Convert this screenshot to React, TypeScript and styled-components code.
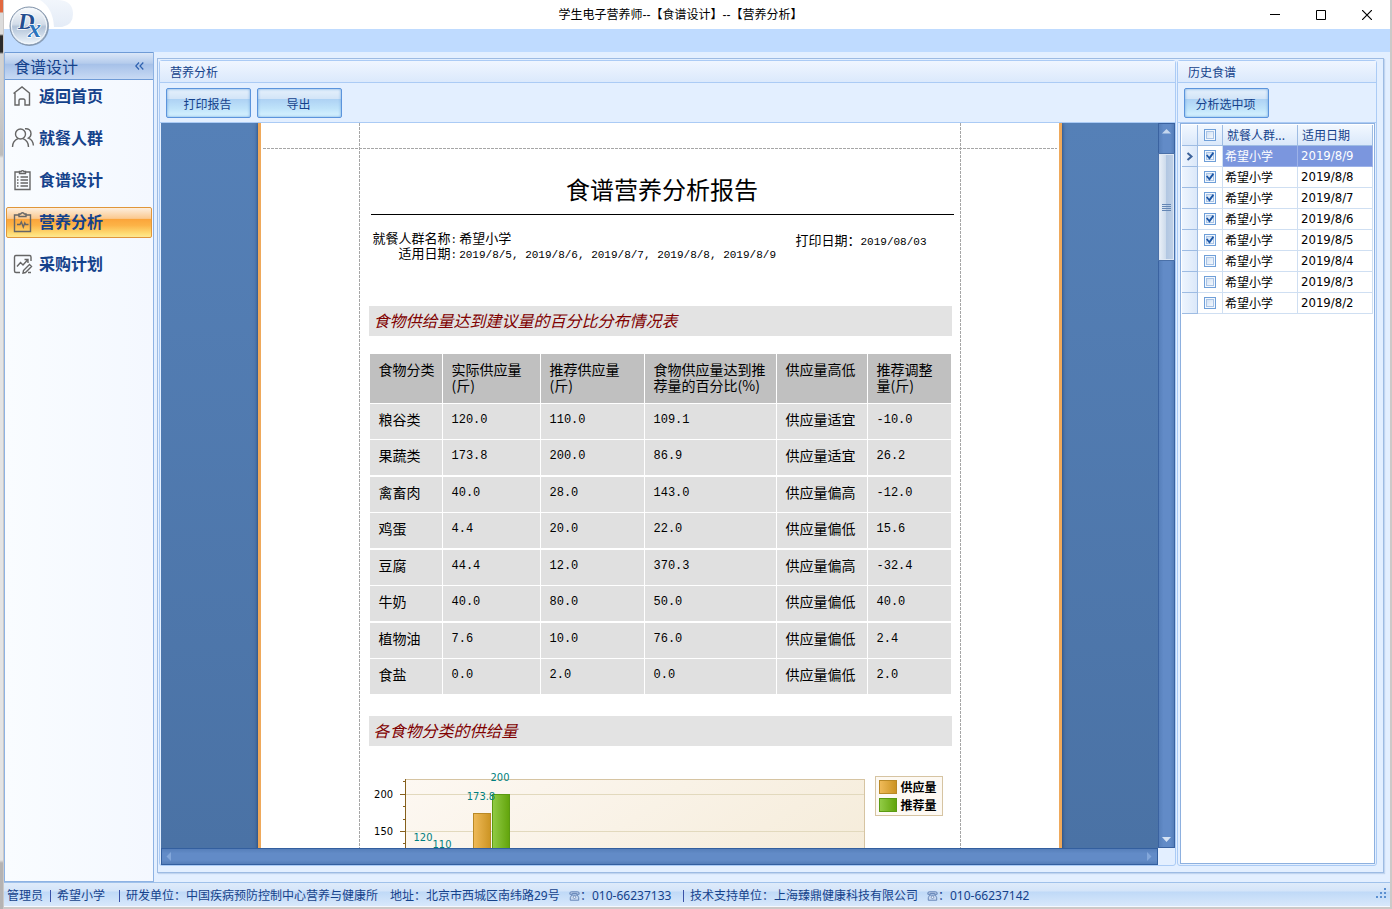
import React from "react";
import styled, { createGlobalStyle, css } from "styled-components";

const ui = `"Liberation Sans", "Noto Sans CJK SC", sans-serif`;
const cjk = `"Noto Sans CJK SC", sans-serif`;
const tahoma = `"DejaVu Sans Condensed", "Noto Sans CJK SC", sans-serif`;
const mono = `"Liberation Mono", "Noto Sans CJK SC", monospace`;
const ink = "#15428b";

const GlobalStyle = createGlobalStyle`
  * { box-sizing: border-box; }
  body {
    margin: 0;
    background: #c9c6c4;
    font-family: ${ui};
    font-size: 12px;
    color: ${ink};
  }
`;

/* ---------- window ---------- */

const Desktop = styled.div`
  display: flex;
  height: 100vh;
  min-height: 600px;
  padding: 0 2px 2px 4px;
  background:
    linear-gradient(#e2683f 0 12px, #dcdcdc 13px 34px, #2b2b2b 36px 52px, #d2d2d2 54px 90px, #bcbcbc 155px, #e4e4e4 158px 860px, #b5b3b3 863px) 0 0 / 3px 100% no-repeat,
    #cbc9c8;
`;

const Window = styled.div`
  position: relative;
  flex: 1;
  min-width: 0;
  display: flex;
  flex-direction: column;
  background: #e3efff;
`;

const TitleBar = styled.header`
  flex: none;
  height: 29px;
  display: flex;
  align-items: center;
  padding-left: 105px;
  background: #fff;
`;

const WindowTitle = styled.h1`
  flex: 1;
  margin: 0;
  text-align: center;
  font: 12px/28px ${ui};
  color: #000;
`;

const WindowButton = styled.button`
  width: 46px;
  height: 28px;
  padding: 0;
  border: 0;
  background: none;
  display: flex;
  align-items: center;
  justify-content: center;
`;

const RibbonBand = styled.div`
  flex: none;
  height: 23px;
  background: #bfdbff;
`;

const AppMenu = styled.button`
  position: absolute;
  left: 0;
  top: 0;
  width: 72px;
  height: 50px;
  padding: 0;
  border: 0;
  background: none;
  svg { display: block; }
`;

const Body = styled.div`
  flex: 1;
  min-height: 0;
  display: flex;
`;

/* ---------- navigation ---------- */

const Sidebar = styled.nav`
  flex: none;
  width: 150px;
  border: 1px solid #8db2e3;
  border-top: 0;
  background: linear-gradient(90deg, #f9fcff, #f4f8ff);
`;

const SidebarHeader = styled.div`
  display: flex;
  align-items: center;
  justify-content: space-between;
  height: 28px;
  padding: 0 9px;
  border: 1px solid #6f9bd6;
  border-width: 1px 0;
  background: linear-gradient(#dbe7f8, #b4cbec 40%, #a5c0e8 42%, #c8daf4);
  font: 16px/26px ${cjk};
`;

const CollapseButton = styled.button`
  padding: 0;
  border: 0;
  background: none;
  line-height: 0;
`;

const NavList = styled.ul`
  display: flex;
  flex-direction: column;
  gap: 11px;
  margin: 0;
  padding: 1px;
  list-style: none;
`;

const NavLink = styled.a<{ $active?: boolean }>`
  display: flex;
  align-items: center;
  gap: 4px;
  height: 31px;
  padding: 0 0 2px 4px;
  border: 1px solid transparent;
  border-radius: 2px;
  font: bold 16px/27px ${cjk};
  color: ${ink};
  text-decoration: none;
  svg { flex: none; }
  ${(p) =>
    p.$active &&
    css`
      border-color: #e0963a;
      background: linear-gradient(#fdeedd, #fbc98f 36%, #fba43a 38%, #fcb347 60%, #fedf78 90%, #fee792);
    `}
`;

/* ---------- panels ---------- */

const Frame = styled.main`
  flex: 1;
  min-width: 0;
  display: flex;
  gap: 1px;
  margin: 6px 6px 9px 3px;
  padding: 1px 6px 6px 1px;
  border: 1px solid #9dbbe3;
  box-shadow: 1px 1px 1px #c1d5ef;
`;

const Panel = styled.section<{ $fixed?: boolean }>`
  ${(p) => (p.$fixed ? "flex: none; width: 200px;" : "flex: 1; min-width: 0;")}
  display: flex;
  flex-direction: column;
  border: 1px solid #abcbf5;
  border-radius: 3px;
`;

const Caption = styled.h2`
  flex: none;
  margin: 0;
  height: 22px;
  padding-left: 10px;
  border-bottom: 1px solid #abcbf5;
  background: linear-gradient(#f0f6ff, #dbe9fc);
  font: 12px/22px ${cjk};
`;

const Toolbar = styled.div`
  flex: none;
  display: flex;
  gap: 6px;
  height: 40px;
  padding: 5px 6px 0;
  border-bottom: 1px solid #abcbf5;
`;

const Button = styled.button`
  width: 85px;
  height: 30px;
  padding: 1px 2px 0 0;
  border: 1px solid #5b94dc;
  border-radius: 2px;
  background: linear-gradient(#e6f1fc, #d3e5f8 34%, #aed2f4 37%, #bfe3fa 70%, #d9f4ff);
  box-shadow: inset 0 0 3px #6ea4de;
  font: 12px/26px ${cjk};
  color: ${ink};
`;

/* ---------- report viewer ---------- */

const Viewer = styled.div`
  flex: 1;
  min-height: 0;
  display: grid;
  grid-template-columns: minmax(0, 1fr) 17px;
  grid-template-rows: minmax(0, 1fr) 17px;
  padding-left: 1px;
`;

const Canvas = styled.div`
  overflow: hidden;
  display: flex;
  justify-content: center;
  background: linear-gradient(#5580b7, #4a72a5);
`;

const Sheet = styled.article`
  flex: none;
  width: 804px;
  height: 1000px;
  padding: 50px 107px 0 108px;
  border: solid #efa95b;
  border-width: 0 3px;
  background:
    repeating-linear-gradient(90deg, #a6a6a6 0 3px, transparent 3px 4px) 2px 25px / 794px 1px no-repeat,
    repeating-linear-gradient(#a6a6a6 0 3px, transparent 3px 4px) 98px 0 / 1px 100% no-repeat,
    repeating-linear-gradient(#a6a6a6 0 3px, transparent 3px 4px) 699px 0 / 1px 100% no-repeat,
    #fff;
  box-shadow: 0 0 4px #1d3c6c;
  color: #000;
`;

const ReportTitle = styled.h3`
  margin: 0 -2px 0 2px;
  padding-bottom: 9px;
  border-bottom: 1px solid #000;
  text-align: center;
  font: 24px/32px ${cjk};
`;

const ReportInfo = styled.div`
  display: flex;
  justify-content: space-between;
  height: 46px;
  padding: 15px 25px 0 4px;
  font: 13px/15px ${cjk};
`;

const InfoList = styled.dl`
  display: grid;
  grid-template-columns: auto auto;
  grid-auto-rows: 15px;
  column-gap: 2px;
  margin: 0;
  dt { text-align: right; }
  dd { margin: 0; white-space: nowrap; }
`;

const PrintDate = styled.div`
  padding-top: 2px;
`;

const Figures = styled.span`
  font-family: ${mono};
  font-size: 11px;
  line-height: 1;
`;

const Band = styled.h4<{ $gap: number }>`
  margin: ${(p) => p.$gap}px 0 0;
  height: 30px;
  padding-left: 5px;
  background: #e3e3e3;
  font: italic 16px/28px ${cjk};
  color: #800000;
`;

const FoodTable = styled.table`
  table-layout: fixed;
  width: 581px;
  margin: 18px 0 0 1px;
  border-collapse: separate;
  border-spacing: 0;
  th, td {
    padding: 7px 0 0 9px;
    border: solid #fff;
    border-width: 0 1px 1px 0;
    background: #e0e0e0;
    background-clip: padding-box;
    vertical-align: top;
    text-align: left;
    font: 14px/16px ${cjk};
    white-space: nowrap;
  }
  th:last-child, td:last-child { border-right: 0; }
  thead th { height: 50px; background-color: #c0c0c0; }
  tbody tr > * { height: 36px; }
  tbody tr:nth-child(even) > * { height: 37px; border-bottom-width: 2px; }
  td.figure { padding-top: 8px; font: 12px/16px ${mono}; }
`;

const ChartRow = styled.div`
  display: flex;
  align-items: flex-start;
  gap: 6px;
  margin-top: 24px;
  svg { flex: none; display: block; }
`;

const Legend = styled.ul`
  flex: none;
  width: 68px;
  height: 40px;
  margin: 6px 0 0;
  padding: 1px 3px;
  border: 1px solid #d6c4a2;
  background: #fdf9f3;
  list-style: none;
  li {
    display: flex;
    align-items: center;
    gap: 4px;
    height: 18px;
    font: bold 12px/18px ${cjk};
  }
`;

const Swatch = styled.i<{ $from: string; $to: string; $edge: string }>`
  width: 18px;
  height: 14px;
  border: 1px solid ${(p) => p.$edge};
  background: linear-gradient(90deg, ${(p) => p.$from}, ${(p) => p.$to});
`;

/* ---------- scroll bars ---------- */

const VScroll = styled.div`
  display: flex;
  flex-direction: column;
  align-items: stretch;
  justify-content: space-between;
  border: 1px solid #3a62a0;
  background: linear-gradient(90deg, #567fba, #628bc7 30%, #628bc7 75%, #557eb9);
`;

const HScroll = styled.div`
  display: flex;
  justify-content: space-between;
  border: 1px solid #335f9f;
  background: linear-gradient(#567fba, #628bc7 30%, #628bc7 75%, #557eb9);
`;

const Arrow = styled.svg`
  flex: none;
  display: block;
  width: 15px;
  height: 15px;
`;

const Track = styled.div`
  flex: 1;
  padding-top: 15px;
`;

const Thumb = styled.div`
  display: flex;
  flex-direction: column;
  justify-content: center;
  align-items: center;
  gap: 1px;
  height: 106px;
  border: 1px solid #dfe8f4;
  box-shadow: 0 0 0 1px #4a70a8;
  background: linear-gradient(90deg, #e6edf6, #cddbec 45%, #b2c7e2 50%, #bfd0e6);
  i { width: 9px; height: 1px; background: #6486b4; }
`;

/* ---------- history grid ---------- */

const GridBox = styled.div`
  flex: 1;
  min-height: 0;
  margin: 0 1px 1px 2px;
  padding: 1px;
  border: 1px solid #8db0df;
  background: #fff;
`;

const HistoryTable = styled.table`
  table-layout: fixed;
  width: 100%;
  border-collapse: separate;
  border-spacing: 0;
  th, td {
    height: 21px;
    padding: 0 0 0 2px;
    border: solid #cfdff2;
    border-width: 0 1px 1px 0;
    text-align: left;
    white-space: nowrap;
    overflow: hidden;
    font: 12px/20px ${cjk};
    color: #000;
  }
  thead th {
    padding-left: 4px;
    border-color: #9ebce3;
    background: linear-gradient(#f2f8ff, #dae8fa);
    color: ${ink};
  }
  th.mark {
    padding: 0 0 0 4px;
    line-height: 0;
    border-color: #9ebce3;
    background: linear-gradient(90deg, #eef5fe, #dbe8f9);
  }
  th.pick, td.pick { padding: 0; text-align: center; line-height: 0; }
  td.date { padding-left: 3px; font: 13px/20px ${tahoma}; }
  tr.selected td:not(.pick) { background: #7b96de; color: #fff; border-color: #9db2e8; }
`;

const CheckBox = styled.input`
  appearance: none;
  position: relative;
  width: 12px;
  height: 12px;
  margin: 0;
  vertical-align: middle;
  border: 1px solid #6f9fd8;
  background: linear-gradient(135deg, #c6d9f0, #fff);
  box-shadow: inset 0 0 0 1px #f3f8fe, inset 0 0 0 2px #a9c4e6;
  &:checked::before {
    content: "";
    position: absolute;
    inset: 1px;
    background: #1c56a6;
    clip-path: polygon(0 45%, 18% 32%, 40% 58%, 85% 0, 100% 18%, 44% 98%);
  }
`;

/* ---------- status bar ---------- */

const StatusBar = styled.footer`
  flex: none;
  display: flex;
  align-items: center;
  height: 25px;
  padding: 2px 2px 0 3px;
  border-top: 1px solid #9fc1ea;
  border-bottom: 1px solid #f5f9ff;
  background: linear-gradient(#dfebfa, #d3e4f9 36%, #bfd9f7 38%, #d8e8fb);
  font: 12px/20px "Noto Sans", "Noto Sans CJK SC", sans-serif;
  white-space: nowrap;
`;

const StatusItem = styled.span<{ $width: number }>`
  flex: none;
  display: flex;
  align-items: center;
  width: ${(p) => p.$width}px;
`;

const Separator = styled.i`
  flex: none;
  width: 1px;
  height: 12px;
  margin-right: 6px;
  background: #3a52a8;
`;

const Grip = styled.svg`
  margin: 0 0 4px auto;
`;

/* ---------- drawings ---------- */

const iconProps = {
  width: 24,
  height: 24,
  viewBox: "0 0 24 24",
  fill: "none",
  stroke: "#666",
  strokeWidth: 1.4,
  "aria-hidden": true,
} as const;

const HomeIcon = () => (
  <svg {...iconProps}>
    <path d="M2.500 9.500 11 3 19 9.500M4 9V21H8V16.500a1.500 1.500 0 0 1 1.500-1.500h3a1.500 1.500 0 0 1 1.500 1.500V21H18.500V9" />
  </svg>
);

const PeopleIcon = () => (
  <svg {...iconProps}>
    <circle cx="9.5" cy="8" r="5" />
    <path d="M1.500 21c0-4 2.500-7 5.500-8.300M12 12.700c3 1.300 5.500 4.300 5.500 8.300M14 2.800c3.500-.6 6 1.700 6 4.700 0 2.200-1 3.800-2.600 4.600 2.800 1.200 4.800 3.900 5 7.400" />
  </svg>
);

const ListIcon = () => (
  <svg {...iconProps}>
    <path d="M8 4H4V21.500H19V4H15M8.500 5.500V3.500h1.700a1.400 1.400 0 0 1 2.600 0h1.700v2Z" />
    <path d="M9.500 9H17M9.500 12H17M9.500 15H17M9.500 18H17M6 9h1.500M6 12h1.500M6 15h1.500M6 18h1.500" />
  </svg>
);

const ChartBoardIcon = () => (
  <svg {...iconProps}>
    <path d="M8 5H3.500V21.500H19.500V5H15M8 6.500V4h1.700a1.900 1.900 0 0 1 3.600 0H15v2.500Z" />
    <path d="M6 14.500h3l1.300-2.500 2 5 1.500-4 .8 1.500H17.500" />
  </svg>
);

const PlanIcon = () => (
  <svg {...iconProps}>
    <path d="M20 9V5a1.500 1.500 0 0 0-1.500-1.500H5A1.500 1.500 0 0 0 3.500 5V19A1.500 1.500 0 0 0 5 20.500H9" />
    <path d="M6 14.500 9.500 10.500 12 13 16.500 8M13.500 7.500H17V11M12.500 18.500 18.500 12.500 20.500 14.500 14.500 20.500 12 21ZM17 20.500H20" />
  </svg>
);

const PhoneIcon = () => (
  <svg width="13" height="12" viewBox="0 0 13 12" aria-hidden="true">
    <path d="M1 4V2.500Q1 1 3 1H10Q12 1 12 2.500V4H9V3H4V4Z" fill="#b6c9e6" stroke="#5879ae" />
    <path d="M3 5H10L11.500 8V11H1.500V8Z" fill="#cbdaf0" stroke="#5879ae" />
    <circle cx="6.500" cy="7.500" r="1.500" fill="#eef4fd" stroke="#5879ae" strokeWidth=".8" />
  </svg>
);

const Logo = () => (
  <svg width="72" height="50" viewBox="0 0 72 50" aria-hidden="true">
    <defs>
      <linearGradient id="orb" x2="0" y2="1">
        <stop offset="0" stopColor="#fafcfe" />
        <stop offset=".45" stopColor="#d3dde9" />
        <stop offset=".52" stopColor="#b2c3d8" />
        <stop offset="1" stopColor="#f0f7fd" />
      </linearGradient>
      <linearGradient id="tab" x2="0" y2="1">
        <stop offset="0" stopColor="#f2f6fc" />
        <stop offset="1" stopColor="#e4ecf7" />
      </linearGradient>
    </defs>
    <path d="M36 0H55Q69 1 69 14Q69 25 58 27H50Q49 8 36 0Z" fill="url(#tab)" />
    <circle cx="25.500" cy="26.500" r="19.500" fill="#66798f" opacity=".6" />
    <circle cx="25" cy="26" r="19" fill="url(#orb)" stroke="#8193aa" />
    <circle cx="25" cy="26" r="17.500" fill="none" stroke="#f4f8fc" />
    <g fontFamily="Liberation Serif, serif" fontStyle="italic" fontWeight="bold" stroke="#fff" strokeWidth="1.500" paintOrder="stroke">
      <text x="14" y="29" fontSize="23" fill="#244f91">D</text>
      <text x="24" y="37" fontSize="26" fill="#2a73bd">x</text>
    </g>
  </svg>
);

const SupplyChart = () => (
  <svg width="500" height="160" viewBox="0 0 500 160" fontFamily="DejaVu Sans Condensed, sans-serif" fontSize="11" role="img" aria-label="各食物分类的供给量">
    <defs>
      <linearGradient id="plot" x2="1" y2=".5">
        <stop offset="0" stopColor="#fdf8f2" />
        <stop offset="1" stopColor="#f5ecda" />
      </linearGradient>
      <linearGradient id="gold"><stop stopColor="#efba59" /><stop offset="1" stopColor="#cc9423" /></linearGradient>
      <linearGradient id="leaf"><stop stopColor="#91cb45" /><stop offset="1" stopColor="#62a40b" /></linearGradient>
    </defs>
    <g shapeRendering="crispEdges">
      <rect x="36.500" y="9.500" width="459" height="150" fill="url(#plot)" stroke="#d6c4a2" />
      <path d="M37 24.500H495M37 61.500H495" stroke="#e2d9bd" />
      <path d="M36.500 9V160M31 24.500h5M31 61.500h5M34 11.500h2M34 36.500h2M34 49.500h2M34 73.500h2" stroke="#86601d" />
      <rect x="104.500" y="43.500" width="17" height="120" fill="url(#gold)" stroke="#b98926" />
      <rect x="123.500" y="24.500" width="17" height="140" fill="url(#leaf)" stroke="#5b9a12" />
    </g>
    <g fill="#000" textAnchor="end">
      <text x="24" y="28">200</text>
      <text x="24" y="65">150</text>
    </g>
    <g fill="#007f80" textAnchor="middle">
      <text x="54" y="71">120</text>
      <text x="73" y="78">110</text>
      <text x="112" y="30">173.8</text>
      <text x="131" y="11">200</text>
    </g>
  </svg>
);

/* ---------- data ---------- */

const navItems = [
  { label: "返回首页", Icon: HomeIcon },
  { label: "就餐人群", Icon: PeopleIcon },
  { label: "食谱设计", Icon: ListIcon },
  { label: "营养分析", Icon: ChartBoardIcon, active: true },
  { label: "采购计划", Icon: PlanIcon },
];

const foods = [
  ["粮谷类", "120.0", "110.0", "109.1", "供应量适宜", "-10.0"],
  ["果蔬类", "173.8", "200.0", "86.9", "供应量适宜", "26.2"],
  ["禽畜肉", "40.0", "28.0", "143.0", "供应量偏高", "-12.0"],
  ["鸡蛋", "4.4", "20.0", "22.0", "供应量偏低", "15.6"],
  ["豆腐", "44.4", "12.0", "370.3", "供应量偏高", "-32.4"],
  ["牛奶", "40.0", "80.0", "50.0", "供应量偏低", "40.0"],
  ["植物油", "7.6", "10.0", "76.0", "供应量偏低", "2.4"],
  ["食盐", "0.0", "2.0", "0.0", "供应量偏低", "2.0"],
];

const columnWidths = [73, 98, 104, 132, 91, 83];

const history = [9, 8, 7, 6, 5, 4, 3, 2].map((day) => ({
  group: "希望小学",
  date: `2019/8/${day}`,
  checked: day >= 5,
  selected: day === 9,
}));

export default function App() {
  return (
    <>
      <GlobalStyle />
      <Desktop>
        <Window>
          <TitleBar>
            <WindowTitle>学生电子营养师--【食谱设计】--【营养分析】</WindowTitle>
            <WindowButton aria-label="最小化">
              <svg width="10" height="10"><path d="M0 4.500H10" stroke="#000" /></svg>
            </WindowButton>
            <WindowButton aria-label="最大化">
              <svg width="10" height="10"><path d="M.5.5H9.500V9.500H.5Z" fill="none" stroke="#000" /></svg>
            </WindowButton>
            <WindowButton aria-label="关闭">
              <svg width="10" height="10"><path d="M0 0 10 10M10 0 0 10" stroke="#000" strokeWidth="1.200" /></svg>
            </WindowButton>
          </TitleBar>
          <RibbonBand />
          <AppMenu aria-label="菜单"><Logo /></AppMenu>

          <Body>
            <Sidebar>
              <SidebarHeader>
                食谱设计
                <CollapseButton aria-label="折叠">
                  <svg width="9" height="8" fill="none" stroke="#2f62b0" strokeWidth="1.200">
                    <path d="M4 .5.8 4 4 7.500M8.300.5 5 4 8.300 7.500" />
                  </svg>
                </CollapseButton>
              </SidebarHeader>
              <NavList>
                {navItems.map(({ label, Icon, active }) => (
                  <li key={label}>
                    <NavLink href="#" $active={active}>
                      <Icon />
                      {label}
                    </NavLink>
                  </li>
                ))}
              </NavList>
            </Sidebar>

            <Frame>
              <Panel>
                <Caption>营养分析</Caption>
                <Toolbar>
                  <Button>打印报告</Button>
                  <Button>导出</Button>
                </Toolbar>
                <Viewer>
                  <Canvas>
                    <Sheet>
                      <ReportTitle>食谱营养分析报告</ReportTitle>
                      <ReportInfo>
                        <InfoList>
                          <dt>就餐人群名称<Figures>:</Figures></dt>
                          <dd>希望小学</dd>
                          <dt>适用日期<Figures>:</Figures></dt>
                          <dd><Figures>2019/8/5, 2019/8/6, 2019/8/7, 2019/8/8, 2019/8/9</Figures></dd>
                        </InfoList>
                        <PrintDate>打印日期：<Figures>2019/08/03</Figures></PrintDate>
                      </ReportInfo>

                      <Band $gap={45}>食物供给量达到建议量的百分比分布情况表</Band>
                      <FoodTable>
                        <colgroup>
                          {columnWidths.map((width, i) => <col key={i} width={width} />)}
                        </colgroup>
                        <thead>
                          <tr>
                            <th>食物分类</th>
                            <th>实际供应量<br />(斤)</th>
                            <th>推荐供应量<br />(斤)</th>
                            <th>食物供应量达到推<br />荐量的百分比(%)</th>
                            <th>供应量高低</th>
                            <th>推荐调整<br />量(斤)</th>
                          </tr>
                        </thead>
                        <tbody>
                          {foods.map((row) => (
                            <tr key={row[0]}>
                              {row.map((cell, i) => (
                                <td key={i} className={i === 0 || i === 4 ? undefined : "figure"}>{cell}</td>
                              ))}
                            </tr>
                          ))}
                        </tbody>
                      </FoodTable>

                      <Band $gap={20}>各食物分类的供给量</Band>
                      <ChartRow>
                        <SupplyChart />
                        <Legend>
                          <li><Swatch $from="#efba59" $to="#cc9423" $edge="#b98926" />供应量</li>
                          <li><Swatch $from="#91cb45" $to="#62a40b" $edge="#5b9a12" />推荐量</li>
                        </Legend>
                      </ChartRow>
                    </Sheet>
                  </Canvas>
                  <VScroll aria-hidden="true">
                    <Arrow><path d="M3 9.500 7.500 5 12 9.500Z" fill="#c5d7ee" /></Arrow>
                    <Track>
                      <Thumb><i /><i /><i /><i /></Thumb>
                    </Track>
                    <Arrow><path d="M3 5 7.500 10 12 5Z" fill="#d5e2f3" /></Arrow>
                  </VScroll>
                  <HScroll aria-hidden="true">
                    <Arrow><path d="M9 3 4.500 7.500 9 12Z" fill="#83a7da" /></Arrow>
                    <Arrow><path d="M5 3 9.500 7.500 5 12Z" fill="#83a7da" /></Arrow>
                  </HScroll>
                </Viewer>
              </Panel>

              <Panel $fixed>
                <Caption>历史食谱</Caption>
                <Toolbar>
                  <Button>分析选中项</Button>
                </Toolbar>
                <GridBox>
                  <HistoryTable>
                    <colgroup>
                      <col width="16" />
                      <col width="25" />
                      <col width="75" />
                      <col />
                    </colgroup>
                    <thead>
                      <tr>
                        <th />
                        <th className="pick"><CheckBox type="checkbox" aria-label="全选" /></th>
                        <th>就餐人群...</th>
                        <th>适用日期</th>
                      </tr>
                    </thead>
                    <tbody>
                      {history.map((row) => (
                        <tr key={row.date} className={row.selected ? "selected" : undefined}>
                          <th className="mark">
                            {row.selected && (
                              <svg width="8" height="9" fill="none" stroke="#3b6199" strokeWidth="2">
                                <path d="M1.500 1 5.500 4.500 1.500 8" />
                              </svg>
                            )}
                          </th>
                          <td className="pick">
                            <CheckBox type="checkbox" defaultChecked={row.checked} aria-label={row.date} />
                          </td>
                          <td>{row.group}</td>
                          <td className="date">{row.date}</td>
                        </tr>
                      ))}
                    </tbody>
                  </HistoryTable>
                </GridBox>
              </Panel>
            </Frame>
          </Body>

          <StatusBar>
            <StatusItem $width={43}>管理员</StatusItem>
            <Separator />
            <StatusItem $width={62}>希望小学</StatusItem>
            <Separator />
            <StatusItem $width={264}>研发单位：中国疾病预防控制中心营养与健康所</StatusItem>
            <StatusItem $width={179}>地址：北京市西城区南纬路29号</StatusItem>
            <StatusItem $width={23}><PhoneIcon />：</StatusItem>
            <StatusItem $width={91}>010-66237133</StatusItem>
            <Separator />
            <StatusItem $width={237}>技术支持单位：上海臻鼎健康科技有限公司</StatusItem>
            <StatusItem $width={23}><PhoneIcon />：</StatusItem>
            <StatusItem $width={91}>010-66237142</StatusItem>
            <Grip width="12" height="12" fill="#5b8fd0" aria-hidden="true">
              <path d="M8 0h2v2h-2zM4 4h2v2h-2zM8 4h2v2h-2zM0 8h2v2h-2zM4 8h2v2h-2zM8 8h2v2h-2z" />
            </Grip>
          </StatusBar>
        </Window>
      </Desktop>
    </>
  );
}
